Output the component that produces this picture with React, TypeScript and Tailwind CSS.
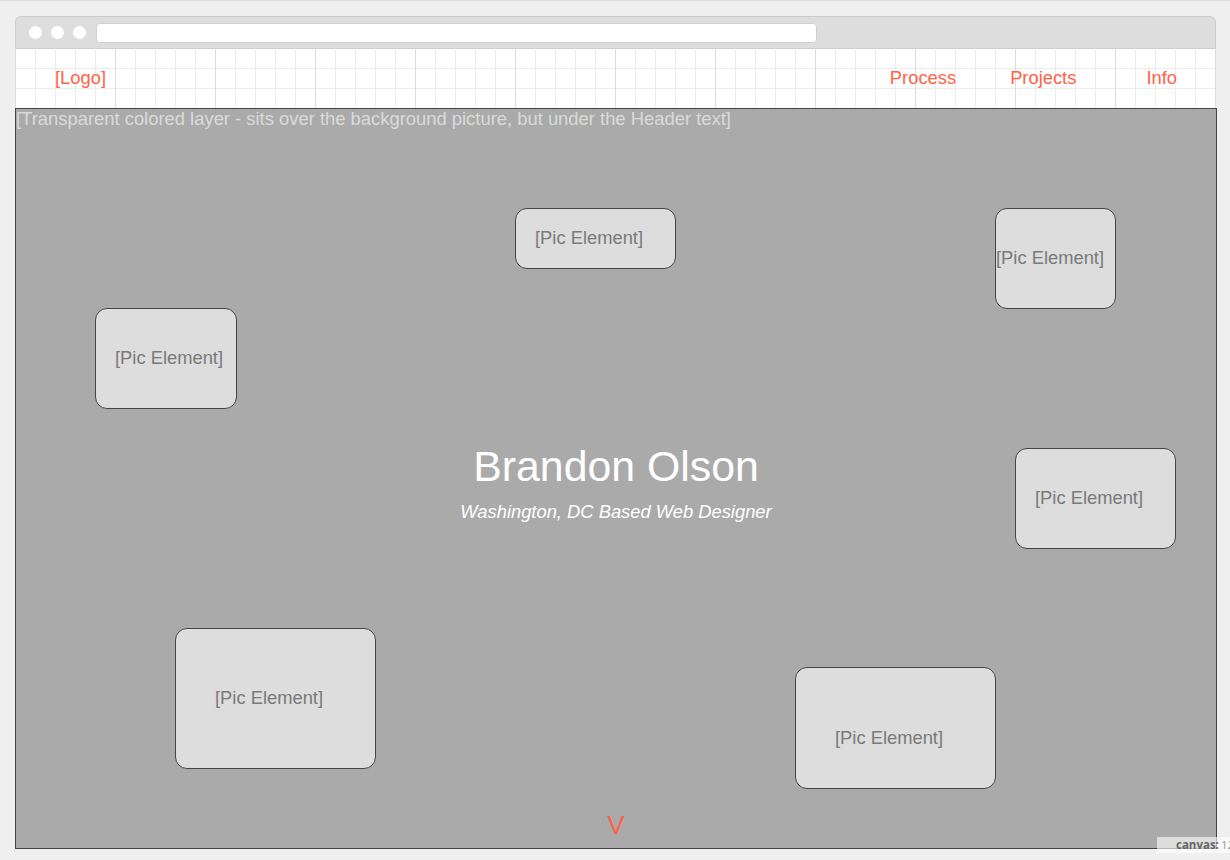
const pics = [
  { pos: "left-[499px] top-[99px] w-[161px] h-[61px]", pad: "pl-[19px] pb-[2px]" },
  { pos: "left-[979px] top-[99px] w-[121px] h-[101px]", pad: "pl-0 pb-[2px]" },
  { pos: "left-[79px] top-[199px] w-[142px] h-[101px]", pad: "pl-[19px] pb-[2px]" },
  { pos: "left-[999px] top-[339px] w-[161px] h-[101px]", pad: "pl-[19px] pb-[2px]" },
  { pos: "left-[159px] top-[519px] w-[201px] h-[141px]", pad: "pl-[39px] pb-[2px]" },
  { pos: "left-[779px] top-[558px] w-[201px] h-[122px]", pad: "pl-[39px] pt-[20px]" },
];

function PicElement({ pos, pad }: { pos: string; pad: string }) {
  return (
    <div
      className={`absolute ${pos} ${pad} flex items-center rounded-[12px] border border-[#444] bg-[#dddddd] text-[18.35px] leading-[22px] text-[#7a7a7a] whitespace-nowrap`}
    >
      [Pic Element]
    </div>
  );
}

export default function App() {
  return (
    <div className="relative w-[1230px] h-[860px] overflow-hidden bg-[#efefef] border-t border-[#dcdcdc] pt-[15px] pl-[15px] font-['Liberation_Sans',Arial,sans-serif]">
      {/* browser chrome */}
      <div className="w-[1201px]">
        <div className="h-[32px] flex items-center rounded-t-[6px] border-t border-x border-[#cccccc] bg-[#dddddd] pl-[13px]">
          <div className="flex gap-[9px]">
            <span className="w-[13px] h-[13px] rounded-full bg-white" />
            <span className="w-[13px] h-[13px] rounded-full bg-white" />
            <span className="w-[13px] h-[13px] rounded-full bg-white" />
          </div>
          <div className="ml-[10px] w-[721px] h-[20px] rounded-[4px] border border-[#d0d0d0] bg-white" />
        </div>

        {/* header with grid */}
        <div className="h-[60px] flex items-center pl-[40px] pr-[39px] bg-white [background-image:linear-gradient(to_right,#dddddd_1px,transparent_1px),linear-gradient(to_right,#ececec_1px,transparent_1px),linear-gradient(to_bottom,#cccccc_1px,transparent_1px),linear-gradient(to_bottom,#ececec_1px,transparent_1px)] [background-size:100px_100px,20px_20px,100px_100px,20px_20px] text-[18.35px] text-[#ff6347]">
          <span>[Logo]</span>
          <span className="ml-auto">Process</span>
          <span className="ml-[54px]">Projects</span>
          <span className="ml-[70px]">Info</span>
        </div>
      </div>

      {/* transparent layer */}
      <div className="relative w-[1202px] h-[741px] border border-[#444] bg-[#aaaaaa] flex flex-col items-center">
        <div className="self-start text-[18.4px] leading-[20px] text-[#dadada] whitespace-nowrap">
          [Transparent colored layer - sits over the background picture, but under the Header text]
        </div>

        {pics.map((p, i) => (
          <PicElement key={i} pos={p.pos} pad={p.pad} />
        ))}

        <h1 className="mt-[312px] text-[42.8px] leading-[50px] text-white">Brandon Olson</h1>
        <p className="mt-[10px] text-[18.35px] leading-[22px] italic text-white">
          Washington, DC Based Web Designer
        </p>

        <div className="mt-auto mb-[8px] text-[26px] leading-[30px] text-[#ff6347]">V</div>
      </div>

      <div className="absolute left-[1157px] top-[836px] h-[16px] w-[73px] overflow-hidden bg-white/60 flex items-center pl-[19px] text-[11.5px] whitespace-nowrap font-['Open_Sans',sans-serif]">
        <span className="font-bold text-[#666]">canvas:</span>
        <span className="ml-[2px] text-[#999]">120</span>
      </div>
    </div>
  );
}
